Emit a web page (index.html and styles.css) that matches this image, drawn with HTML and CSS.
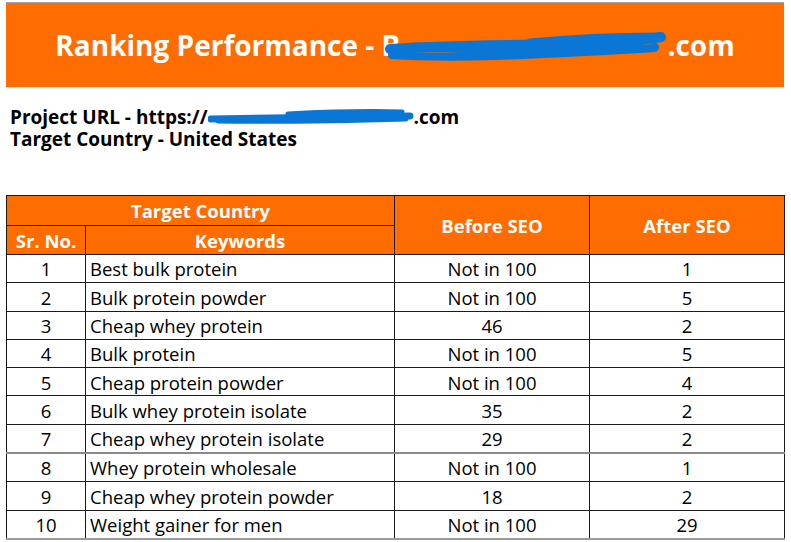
FILE: index.html
```html
<!DOCTYPE html>
<html>
<head>
<meta charset="utf-8">
<link rel="stylesheet" href="styles.css">
</head>
<body>
<div class="page">
  <header class="banner">
    <h1 class="title">Ranking Performance - B<svg class="redact-title" width="282" height="30" viewBox="0 0 282 30"><g fill="none" stroke="#0a77d6" stroke-linecap="round" stroke-linejoin="round"><path d="M5 17 C 60 13, 135 13, 192 12 S 258 8, 276 5" stroke-width="10"/><path d="M7 23 C 70 27, 145 23, 220 19 S 260 16, 270 15" stroke-width="8"/><path d="M145 10 C 195 5, 242 4, 275 4" stroke-width="7"/><path d="M30 15 C 90 17, 155 19, 230 17" stroke-width="9"/></g></svg>.com</h1>
  </header>

  <section class="info">
    <p class="info-line">Project URL - https://<svg class="redact-url" width="206" height="18" viewBox="0 0 206 18"><g fill="none" stroke="#0a77d6" stroke-linecap="round" stroke-linejoin="round"><path d="M3 11 C 50 10, 120 9, 202 8" stroke-width="7"/><path d="M80 6 C 120 4, 160 3, 194 4" stroke-width="5"/><path d="M10 13 C 70 14, 130 13, 198 11" stroke-width="5"/></g></svg>.com</p>
    <p class="info-line">Target Country - United States</p>
  </section>

  <table class="ranks">
    <colgroup>
      <col class="col-sr">
      <col class="col-kw">
      <col class="col-before">
      <col class="col-after">
    </colgroup>
    <thead>
      <tr class="hrow1">
        <th colspan="2">Target Country</th>
        <th rowspan="2">Before SEO</th>
        <th rowspan="2">After SEO</th>
      </tr>
      <tr class="hrow2">
        <th>Sr. No.</th>
        <th>Keywords</th>
      </tr>
    </thead>
    <tbody>
      <tr><td class="c">1</td><td class="kw">Best bulk protein</td><td class="c">Not in 100</td><td class="c">1</td></tr>
      <tr><td class="c">2</td><td class="kw">Bulk protein powder</td><td class="c">Not in 100</td><td class="c">5</td></tr>
      <tr><td class="c">3</td><td class="kw">Cheap whey protein</td><td class="c">46</td><td class="c">2</td></tr>
      <tr><td class="c">4</td><td class="kw">Bulk protein</td><td class="c">Not in 100</td><td class="c">5</td></tr>
      <tr><td class="c">5</td><td class="kw">Cheap protein powder</td><td class="c">Not in 100</td><td class="c">4</td></tr>
      <tr><td class="c">6</td><td class="kw">Bulk whey protein isolate</td><td class="c">35</td><td class="c">2</td></tr>
      <tr class="break-after"><td class="c">7</td><td class="kw">Cheap whey protein isolate</td><td class="c">29</td><td class="c">2</td></tr>
      <tr><td class="c">8</td><td class="kw">Whey protein wholesale</td><td class="c">Not in 100</td><td class="c">1</td></tr>
      <tr><td class="c">9</td><td class="kw">Cheap whey protein powder</td><td class="c">18</td><td class="c">2</td></tr>
      <tr class="last"><td class="c">10</td><td class="kw">Weight gainer for men</td><td class="c">Not in 100</td><td class="c">29</td></tr>
    </tbody>
  </table>
</div>
</body>
</html>
```

FILE: styles.css
```css
html, body {
  margin: 0;
  padding: 0;
  background: #ffffff;
}

body {
  font-family: "Open Sans", Lato, "Liberation Sans", sans-serif;
  color: #000;
}

.page {
  padding: 2px 7px 0 6px;
}

.banner {
  border-top: 1px solid #a3a3a3;
  background: #ff6c00;
  height: 84px;
  display: flex;
  align-items: center;
  justify-content: center;
  border-bottom: 1px solid #f3e6de;
}

.title {
  margin: 0;
  color: #fff;
  font-weight: 700;
  font-size: 28px;
  line-height: 32px;
  white-space: nowrap;
}

.redact-title {
  vertical-align: -6px;
  margin-left: -15px;
}

.info {
  padding: 18px 0 0 4px;
}

.info-line {
  margin: 0;
  font-weight: 700;
  font-size: 19px;
  line-height: 22px;
  white-space: nowrap;
}

.redact-url {
  vertical-align: -2px;
}

.ranks {
  margin-top: 45px;
  width: 778px;
  border-collapse: collapse;
  table-layout: fixed;
}

.col-sr { width: 79px; }
.col-kw { width: 309px; }
.col-before { width: 195px; }
.col-after { width: 195px; }

.ranks th {
  background: #ff6c00;
  color: #fff;
  font-weight: 700;
  font-size: 18.5px;
  line-height: 1;
  border: 1px solid #1a1a1a;
  padding: 2px 0 0;
  text-align: center;
}

.hrow1 th {
  height: 27px;
}

.hrow2 th {
  height: 26px;
}

.ranks td {
  border: 1px solid #1a1a1a;
  font-size: 18.5px;
  height: 25.3px;
  padding: 2px 0 0;
  line-height: 1;
  white-space: nowrap;
}

.ranks td.c {
  text-align: center;
}

.ranks td.kw {
  padding-left: 4px;
}

.ranks tr.break-after td {
  border-bottom: 2px solid #8a8a8a;
}

.ranks tr.last td {
  border-bottom: 2px solid #9a9a9a;
}
```
